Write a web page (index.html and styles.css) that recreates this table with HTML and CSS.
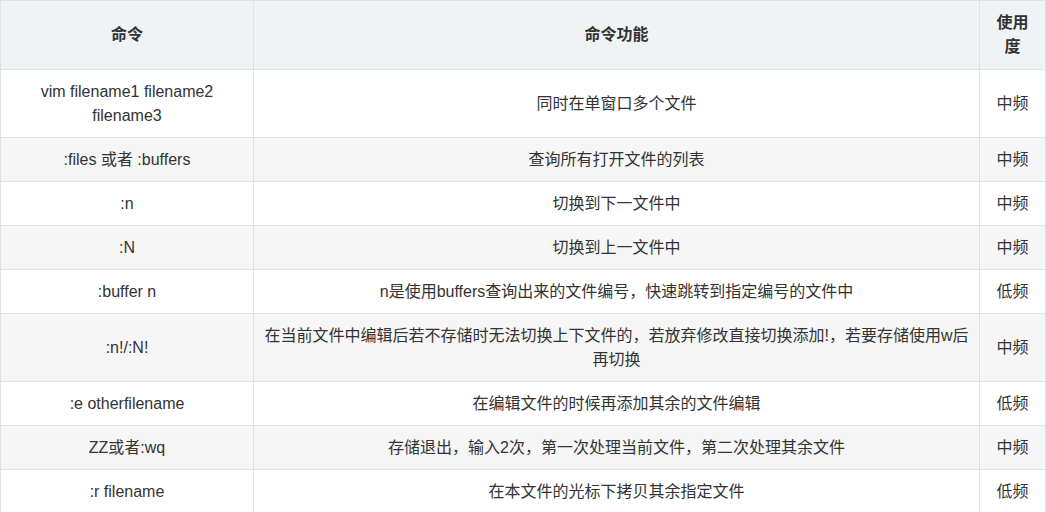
FILE: index.html
```html
<!DOCTYPE html>
<html lang="zh">
<head>
<meta charset="utf-8">
<link rel="stylesheet" href="styles.css">
</head>
<body>
<table class="cmd-table">
  <colgroup>
    <col class="c1">
    <col class="c2">
    <col class="c3">
  </colgroup>
  <thead>
    <tr><th>命令</th><th>命令功能</th><th>使用度</th></tr>
  </thead>
  <tbody>
    <tr><td>vim filename1 filename2 filename3</td><td>同时在单窗口多个文件</td><td>中频</td></tr>
    <tr><td>:files 或者 :buffers</td><td>查询所有打开文件的列表</td><td>中频</td></tr>
    <tr><td>:n</td><td>切换到下一文件中</td><td>中频</td></tr>
    <tr><td>:N</td><td>切换到上一文件中</td><td>中频</td></tr>
    <tr><td>:buffer n</td><td>n是使用buffers查询出来的文件编号，快速跳转到指定编号的文件中</td><td>低频</td></tr>
    <tr><td>:n!/:N!</td><td>在当前文件中编辑后若不存储时无法切换上下文件的，若放弃修改直接切换添加!，若要存储使用w后再切换</td><td>中频</td></tr>
    <tr><td>:e otherfilename</td><td>在编辑文件的时候再添加其余的文件编辑</td><td>低频</td></tr>
    <tr><td>ZZ或者:wq</td><td>存储退出，输入2次，第一次处理当前文件，第二次处理其余文件</td><td>中频</td></tr>
    <tr><td>:r filename</td><td>在本文件的光标下拷贝其余指定文件</td><td>低频</td></tr>
  </tbody>
</table>
</body>
</html>
```
FILE: styles.css
```css
html, body {
  margin: 0;
  padding: 0;
  background: #ffffff;
}
body {
  font-family: "Liberation Sans", Arial, "Noto Sans CJK SC", sans-serif;
  font-size: 16px;
  line-height: 24px;
  color: #333333;
}
.cmd-table {
  border-collapse: collapse;
  table-layout: fixed;
  width: 1045px;
}
.c1 { width: 253px; }
.c2 { width: 726px; }
.c3 { width: 66px; }
.cmd-table th,
.cmd-table td {
  border: 1px solid #dfe2e5;
  text-align: center;
  vertical-align: middle;
}
.cmd-table th {
  padding: 10px 15px;
  background: #eff3f5;
  font-weight: bold;
  color: #333333;
}
.cmd-table td {
  padding: 9.5px 10px;
}
.cmd-table tbody tr:nth-child(even) td {
  background: #f6f6f6;
}
```
